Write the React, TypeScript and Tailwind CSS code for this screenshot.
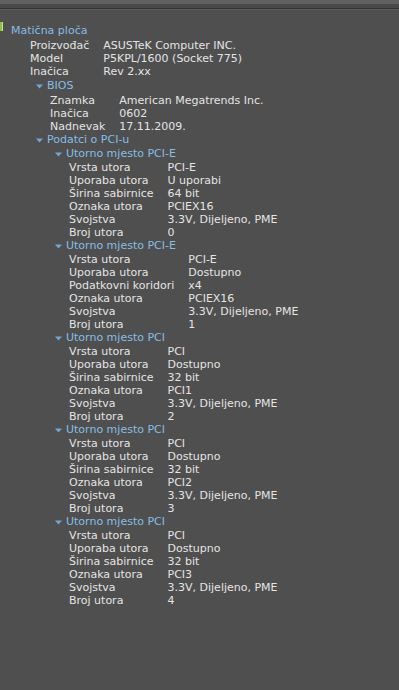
import React from "react";

type Row = [string, string];

interface Slot {
  title: string;
  rows: Row[];
}

const board: Row[] = [
  ["Proizvođač", "ASUSTeK Computer INC."],
  ["Model", "P5KPL/1600 (Socket 775)"],
  ["Inačica", "Rev 2.xx"],
];

const bios: Row[] = [
  ["Znamka", "American Megatrends Inc."],
  ["Inačica", "0602"],
  ["Nadnevak", "17.11.2009."],
];

const slots: Slot[] = [
  {
    title: "Utorno mjesto PCI-E",
    rows: [
      ["Vrsta utora", "PCI-E"],
      ["Uporaba utora", "U uporabi"],
      ["Širina sabirnice", "64 bit"],
      ["Oznaka utora", "PCIEX16"],
      ["Svojstva", "3.3V, Dijeljeno, PME"],
      ["Broj utora", "0"],
    ],
  },
  {
    title: "Utorno mjesto PCI-E",
    rows: [
      ["Vrsta utora", "PCI-E"],
      ["Uporaba utora", "Dostupno"],
      ["Podatkovni koridori", "x4"],
      ["Oznaka utora", "PCIEX16"],
      ["Svojstva", "3.3V, Dijeljeno, PME"],
      ["Broj utora", "1"],
    ],
  },
  ...[1, 2, 3].map((n) => ({
    title: "Utorno mjesto PCI",
    rows: [
      ["Vrsta utora", "PCI"],
      ["Uporaba utora", "Dostupno"],
      ["Širina sabirnice", "32 bit"],
      ["Oznaka utora", `PCI${n}`],
      ["Svojstva", "3.3V, Dijeljeno, PME"],
      ["Broj utora", String(n + 1)],
    ] as Row[],
  })),
];

function Caret() {
  return (
    <svg width="7" height="5" viewBox="0 0 7 5" className="shrink-0">
      <path d="M0 0.5h7L3.5 4.5z" fill="#6fa8d6" />
    </svg>
  );
}

function Header({ children, caret = true }: { children: React.ReactNode; caret?: boolean }) {
  return (
    <div className="flex items-center gap-[4px] h-[14px] text-[#86bde3]">
      {caret && <Caret />}
      <span>{children}</span>
    </div>
  );
}

function Table({ rows }: { rows: Row[] }) {
  return (
    <div className="grid grid-cols-[auto_1fr] gap-x-[14px] text-[#e4e4e4]">
      {rows.map(([k, v], i) => (
        <React.Fragment key={i}>
          <span className="h-[13px] leading-[13px] whitespace-nowrap">{k}</span>
          <span className="h-[13px] leading-[13px] whitespace-nowrap">{v}</span>
        </React.Fragment>
      ))}
    </div>
  );
}

export default function App() {
  return (
    <div
      className="w-[399px] h-[690px] bg-[#4f4f4f] overflow-hidden text-[11px] leading-[14px]"
      style={{ fontFamily: '"DejaVu Sans", Verdana, sans-serif' }}
    >
      {/* window top edge */}
      <div className="h-[4px] bg-[#616161]" />
      <div className="h-[4px] bg-[#4a4a4a]" />
      <div className="h-[1px] bg-[#333333]" />
      <div className="h-[1px] bg-[#5a5a5a]" />

      <div className="relative pt-[14px]">
        <div className="absolute left-0 top-[12px] w-[3px] h-[9px] bg-[#8fc04a] border-r border-[#c8e08a]" />
        <div className="pl-[11px]">
          <Header caret={false}>Matična ploča</Header>
          <div className="pl-[19px] pt-[1px]">
            <Table rows={board} />
          </div>
          <div className="pl-[25px] pt-[1px]">
            <Header>BIOS</Header>
            <div className="pl-[14px] pt-[1px]">
              <Table rows={bios} />
            </div>
            <Header>Podatci o PCI-u</Header>
            <div className="pl-[19px]">
              {slots.map((s, i) => (
                <div key={i}>
                  <Header>{s.title}</Header>
                  <div className="pl-[14px]">
                    <Table rows={s.rows} />
                  </div>
                </div>
              ))}
            </div>
          </div>
        </div>
      </div>
    </div>
  );
}
